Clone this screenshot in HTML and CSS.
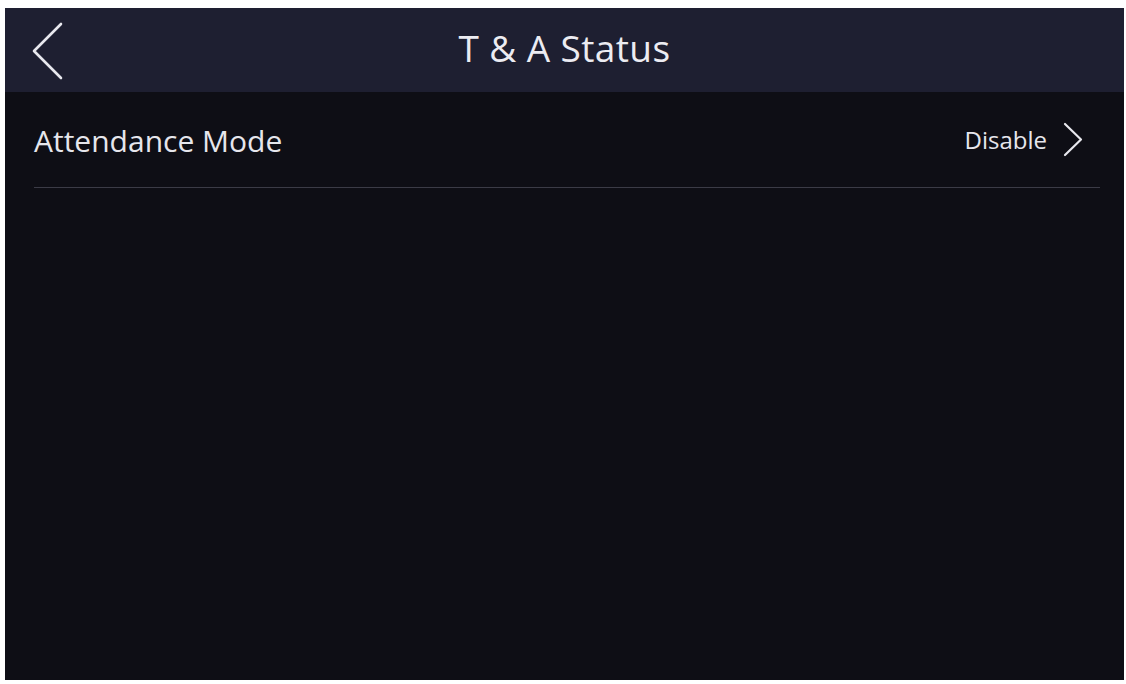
FILE: index.html
```html
<!DOCTYPE html>
<html>
<head>
    <title>T &amp; A Status</title>
    <link rel="stylesheet" href="styles.css">
</head>
<body>
    <div class="screen">
        <div class="top-bar">
            <span class="back-button">
                <svg width="32" height="58" viewBox="0 0 32 58">
                    <polyline points="29,2 2,29 29,56" fill="none" stroke="#e8e8ee" stroke-width="2.6" stroke-linecap="round" stroke-linejoin="round"/>
                </svg>
            </span>
            <span class="top-title">T &amp; A Status</span>
        </div>
        <div class="settings-list">
            <div class="setting-row">
                <span class="setting-label">Attendance Mode</span>
                <span class="setting-value">
                    Disable
                    <svg width="20" height="35" viewBox="0 0 20 35">
                        <polyline points="2,2 18,17.5 2,33" fill="none" stroke="#e8e8ee" stroke-width="2.2" stroke-linecap="round" stroke-linejoin="round"/>
                    </svg>
                </span>
            </div>
        </div>
    </div>
</body>
</html>
```

FILE: styles.css
```css
body {
    margin: 0;
    padding: 0;
    background-color: #fff;
    font-family: "Open Sans", "Noto Sans", sans-serif;
}
.screen {
    width: 1119px;
    height: 672px;
    margin: 8px 0 0 5px;
    background-color: #0e0e15;
    display: flex;
    flex-direction: column;
}
.top-bar {
    position: relative;
    height: 78px;
    padding-bottom: 6px;
    background-color: #1e1f31;
    display: flex;
    align-items: center;
    justify-content: center;
}
.back-button {
    position: absolute;
    left: 27px;
    top: 14px;
    cursor: pointer;
}
.top-title {
    color: #ececf2;
    font-size: 37px;
    letter-spacing: 0.4px;
}
.settings-list {
    padding: 0 24px 0 29px;
}
.setting-row {
    height: 95px;
    display: flex;
    align-items: center;
    justify-content: space-between;
    border-bottom: 1.5px solid #3b3b46;
}
.setting-label {
    color: #e6e6ec;
    font-size: 30px;
    padding-top: 2px;
}
.setting-value {
    display: flex;
    align-items: center;
    gap: 16px;
    color: #e6e6ec;
    font-size: 24px;
    padding-right: 17px;
}
```
